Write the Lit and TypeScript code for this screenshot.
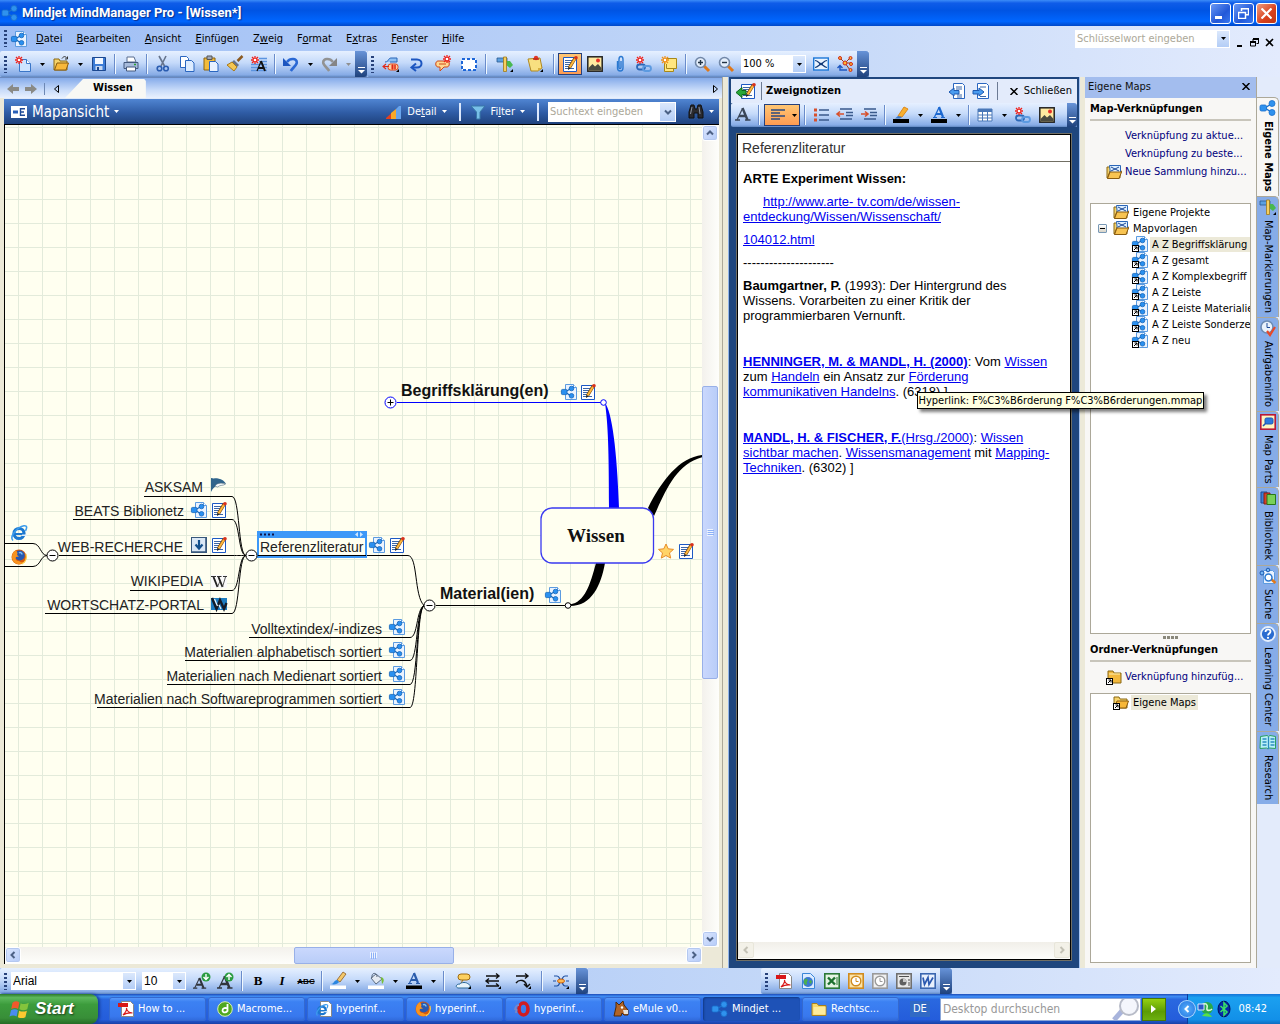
import { LitElement, html, svg, css, nothing } from "lit";
import { customElement } from "lit/decorators.js";

const graph = svg`<path d="M5 8 11 4M5 8 11 12" stroke="#1a70cc" stroke-width="1.500" fill="none"/><rect x="0" y="5" width="6.500" height="6" rx="1.500" fill="#2f92ee" stroke="#1a70cc" stroke-width=".8"/><circle cx="12" cy="3.500" r="3" fill="#2f92ee" stroke="#1a70cc" stroke-width=".8"/><circle cx="12" cy="12.500" r="3" fill="#2f92ee" stroke="#1a70cc" stroke-width=".8"/>`;
const page = svg`<path d="M4.500.5h8l3 3v12h-11z" fill="#eaf3ff" stroke="#5b9be0"/><path d="M12.500.5v3h3" fill="#fff" stroke="#5b9be0"/>`;
const miniGraph = svg`<path d="M4 8 10 4.500M4 8 10 12" stroke="#1464b8" stroke-width="1.200" fill="none"/><rect x=".4" y="5.400" width="5.600" height="5.200" rx="1.200" fill="#2a90f0" stroke="#1464b8" stroke-width=".8"/><circle cx="10.500" cy="4.500" r="2.300" fill="#2a90f0" stroke="#1464b8" stroke-width=".8"/><circle cx="10.500" cy="11.800" r="2.300" fill="#2a90f0" stroke="#1464b8" stroke-width=".8"/>`;
const spark = svg`<path d="M4 0v8M0 4h8M1 1l6 6M7 1 1 7" stroke="#f0201a" stroke-width="1.300"/><circle cx="4" cy="4" r="1.300" fill="#fff"/>`;
const pencil = svg`<path d="M13.500 1.500 7.500 11.500" stroke="#7a4a10" stroke-width="3.400"/><path d="M13.500 2 7.500 11.500" stroke="#ffb83c" stroke-width="2"/><circle cx="14" cy="1.800" r="1.800" fill="#d8301c"/><path d="m6 14 .3-3.200 2.400 1.500z" fill="#222"/>`;
const notePage = svg`<path d="M1.500 1.500h13v14h-13z" fill="#fff" stroke="#1c59c4"/><path d="M3 4.500h8M3 6.500h7M3 8.500h6M3 10.500h4M3 12.500h9" stroke="#3a66a8"/>`;
const folder = svg`<path d="M1 3h5l1 2h7v9H1z" fill="#f6d36b" stroke="#8a6914"/><path d="M1.500 14 4 7h11.500L13 14z" fill="#f8b83a" stroke="#8a5c10"/>`;
const shortcut = svg`<rect x=".5" y="9.500" width="6" height="6" fill="#fff" stroke="#000"/><path d="M2 14 5 11M2.500 11h2.500v2.500" stroke="#000" fill="none"/>`;
const lens = svg`<path d="m10 10 5 5" stroke="#e07818" stroke-width="3"/><circle cx="6.500" cy="6.500" r="5" fill="#e4eefb" stroke="#7288a8" stroke-width="1.600"/>`;
const chain = svg`<rect x="1" y="8.500" width="8" height="5" rx="2.500" fill="none" stroke="#2c68b8" stroke-width="1.800"/><rect x="7" y="10" width="8" height="5" rx="2.500" fill="none" stroke="#5c9ae0" stroke-width="1.800"/>`;
const corner = svg`<path d="M16 13v3h-3z" fill="#000"/>`;
const mountain = svg`<rect x=".8" y=".8" width="14.400" height="14.400" fill="#ffe9a0" stroke="#222" stroke-width="1.500"/><path d="M1.500 12 5.500 8 8 10.500 11 8l3.500 4v2.500h-13z" fill="#4a4a40"/><circle cx="11" cy="4.500" r="2" fill="#e83028"/>`;
const fox = svg`<circle cx="8" cy="8" r="7.500" fill="#d85a0c"/><circle cx="8.800" cy="6.500" r="5" fill="#2858b0"/><path d="M5 1C1 3.500 0 8 2 12c3 4.500 10 4 13 0-2 1.500-5 2-7 0-3 0-4-2-3-4l3-.5-2-1.500.5-2z" fill="#f89420"/><path d="M8 4c1.500-1 3 0 3 1.500" stroke="#7cc0f4" stroke-width="1.500" fill="none"/><path d="M15 5c1 4-1 8-4 10" stroke="#fcd04a" stroke-width="1.200" fill="none"/>`;
const ieE = svg`<circle cx="8" cy="8.500" r="5" fill="none" stroke="#1c78d0" stroke-width="3.200"/><path d="M4 9h9" stroke="#1c78d0" stroke-width="2"/><path d="M11 11h5v-1.500h-5z" fill="#dfeefc"/><path d="M2 15.500C-2 12 6 2 13 .8c4-.3 2.500 3 1.500 5" fill="none" stroke="#3c9cec" stroke-width="1.600"/>`;
const clock = (c: string, f: string) => svg`<rect x=".8" y=".8" width="14.400" height="14.400" fill="${f}" stroke="${c}" stroke-width="1.600"/><circle cx="8" cy="8" r="4.800" fill="#fff" stroke="${c}" stroke-width="1.400"/><path d="M8 5v3.500h2.500" stroke="${c}" fill="none"/>`;
const bigA = (c: string) => svg`<path d="M2 13 7.500 1.500" stroke="${c}" stroke-width="1.200"/><path d="M7.500 1 12.500 13M4 9h6" stroke="${c}" stroke-width="2.400" fill="none"/><path d="M0 13h5M10 13h5.500" stroke="${c}" stroke-width="1.400"/>`;

const ICONS: Record<string, unknown> = {
  graph,
  mapdoc: svg`${page}${miniGraph}`,
  notes: svg`${notePage}${pencil}`,
  maplink: svg`${page}${miniGraph}${shortcut}`,
  new: svg`<path d="M4.500 3.500h7l4 4v8h-11z" fill="#cfe4ff" stroke="#3a76c8"/><path d="M11.500 3.500v4h4" fill="#fff" stroke="#3a76c8"/>${spark}`,
  open: svg`${folder}<path d="M9 2.500c2-3 4-2 5 0m.5-2v2.500h-2.500" stroke="#333" fill="none"/>`,
  save: svg`<path d="M1.500 1.500h13v13h-13z" fill="#3c7cd6" stroke="#1b478f"/><path d="M4 2h8v6H4z" fill="#f2f7ff"/><path d="M4.500 10h7v4h-7z" fill="#c8d8f0"/><path d="M6 11h2v3H6z" fill="#1b478f"/>`,
  print: svg`<path d="M4 1h7l2 5H4z" fill="#fff" stroke="#5b6f90"/><path d="M1 6.500h14v6H1z" fill="#a8bcdc" stroke="#43597e"/><path d="M3.500 11h9v4h-9z" fill="#fff" stroke="#43597e"/><path d="M11 8.500h2" stroke="#2aa030" stroke-width="1.500"/>`,
  cut: svg`<path d="M4 0 9.500 10M11 0 6 10" stroke="#66748c" stroke-width="1.600"/><circle cx="4.500" cy="12.500" r="2.300" fill="none" stroke="#2a5cb0" stroke-width="1.600"/><circle cx="11" cy="12.500" r="2.300" fill="none" stroke="#2a5cb0" stroke-width="1.600"/>`,
  copy: svg`<path d="M1.500.5h6l2 2v9h-8z" fill="#fff" stroke="#2a66c0"/><path d="M6.500 4.500h6l2.500 2.500v8.500H6.500z" fill="#dcebff" stroke="#2a66c0"/>`,
  paste: svg`<path d="M1 2h11v12H1z" fill="#f2bb3c" stroke="#8c6410"/><path d="M4 0h5v3.500H4z" fill="#a0a8b8" stroke="#555"/><path d="M6.500 5.500h6L15 8v7.500H6.500z" fill="#e8f2ff" stroke="#2a66c0"/>`,
  brush: svg`<path d="m15.500 0-5 5" stroke="#8c5a20" stroke-width="2.500"/><path d="m7 4 5 5-2 2-5-5z" fill="#6a7488"/><path d="M5 6 0 9l7 6 3-4z" fill="#f4c652" stroke="#a87818"/>`,
  topicA: svg`<path d="M8 2.500h8M8 5.500h8M0 8.500h16M0 11.500h16M0 14.500h16" stroke="#5c94e0" stroke-width="1.400"/><path d="M6 15 10 5.500" stroke="#111" stroke-width="1.200"/><path d="m10 5 4 10M7 12h5" stroke="#111" stroke-width="2" fill="none"/>${spark}`,
  undo: svg`<path d="M0 2v8h8z" fill="#1d56c0"/><path d="M4 6C7 2 14 2 13.800 6.500c0 3-4 5-6 8.500" fill="none" stroke="#2a68d4" stroke-width="2.600"/>`,
  redo: svg`<path d="M16 2v8H8z" fill="#858585"/><path d="M12 6C9 2 2 2 2.200 6.500c0 3 4 5 6 8.500" fill="none" stroke="#929292" stroke-width="2.600"/>`,
  subtopic: svg`<path d="M2 6c4 0 3-4 6-4h6v4H7" fill="#8ec0f4" stroke="#2a66b8"/><rect x="5" y="8" width="10" height="6" rx="2.500" fill="#ffcf9a" stroke="#e04818"/><path d="M0 10.500h6M3 8l-3 2.500L3 13M8 10h5M8 12h5M9.500 8.500v5M12 8.500v5" stroke="#e02818" stroke-width="1.100" fill="none"/>${corner}`,
  relation: svg`<path d="M2 3.500h6c6 0 6 8 0 8H4" stroke="#1d56c0" stroke-width="2" fill="none"/><path d="M7 7.500 2.500 11.500 7 15" stroke="#1d56c0" stroke-width="2" fill="none"/>`,
  callout: svg`<path d="M3 5h9c3 0 3 6 0 6H9l-4 4V11H3C0 11 0 5 3 5z" fill="#ffd890" stroke="#d04818"/><path d="M4 8h7" stroke="#d04818"/><g transform="translate(8 -1)">${spark}</g>`,
  boundary: svg`<rect x="1" y="3" width="14" height="11" fill="#fff" stroke="#1d66d8" stroke-width="2" stroke-dasharray="3 2"/>`,
  marker: svg`<path d="M0 2h10v4H0z" fill="#5ca0e0" stroke="#2a5890" stroke-width=".8"/><path d="M9 5h4l3 4-3 3-4-3z" fill="#48b850"/><path d="M6.500 1h3v14.500h-3z" fill="#f6cf60" stroke="#a07818" stroke-width=".8"/>${corner}`,
  pin: svg`<path d="m1 3 12-1 2 10-4 3H4z" fill="#f8e080" stroke="#b08820"/><path d="m11 15 0-3h4z" fill="#d8b040"/><circle cx="9" cy="2" r="2.200" fill="#e03828"/><path d="M6 3h6" stroke="#c02818" stroke-width="1.500"/>${corner}`,
  picture: mountain,
  clip: svg`<path d="M5.500 5v7c0 4 5.500 4 5.500 0V3.500c0-4-4-4-4 0v8c0 1.500 2 1.500 2 0V5" fill="none" stroke="#2a78d0" stroke-width="1.400"/>`,
  hyper: svg`${chain}${spark}`,
  task: svg`<path d="M5.500 2.500h10v10h-3v3H3.500v-9z" fill="#ffe680" stroke="#a88818"/><path d="M5.500 8v4.500H13" fill="none" stroke="#a88818"/><path d="M4 0v8M0 4h8M1 1l6 6M7 1 1 7" stroke="#f09018" stroke-width="1.300"/><circle cx="4" cy="4" r="1.200" fill="#fff"/>`,
  zoomin: svg`${lens}<path d="M6.500 4v5M4 6.500h5" stroke="#234" stroke-width="1.400"/>`,
  zoomout: svg`${lens}<path d="M4 6.500h5" stroke="#234" stroke-width="1.400"/>`,
  fit: svg`<rect x=".7" y="2" width="14.600" height="12" fill="#eaf4ff" stroke="#1d78d8" stroke-width="1.400"/><path d="M2 4.500c3 0 4 3 6 3.500M2 11.500c3 0 4-3 6-3.500m6-3.500c-3 0-4 3-6 3.500m6 3.500c-3 0-4-3-6-3.500" stroke="#123a78" stroke-width="1.200" fill="none"/><ellipse cx="8" cy="8" rx="2" ry="1.300" fill="#123a78"/>`,
  balance: svg`<path d="M8 7 3 2M8 7l5-5M8 7h6M8 7l5 7" stroke="#a03818"/><g fill="#ffb830" stroke="#d02818"><circle cx="3" cy="2" r="1.500"/><circle cx="13.500" cy="2" r="1.500"/><circle cx="8" cy="7" r="2"/><circle cx="14" cy="8" r="1.500"/><circle cx="13.500" cy="14" r="1.500"/></g><path d="M3 10v4h7M.5 12 3 9.500 5.500 12" stroke="#1d56c0" fill="none" stroke-width="1.400"/>`,
  mapview: svg`<rect x="0" y="2" width="16" height="12" fill="#fff"/><path d="M2 8h5" stroke="#2a60b8" stroke-width="3"/><path d="M9.500 4v8M9 4.700h5M9 8h4M9 11.300h5" stroke="#1d4a98" stroke-width="1.400" fill="none"/>`,
  detail: svg`<path d="M0 14 5 9.500V15H0z" fill="#e04020"/><path d="m5 9 5-4v10H5z" fill="#f8a828"/><path d="m10 5 3-3 2 0v13h-5z" fill="#68a4ec"/>`,
  filter: svg`<path d="M1 2h14L10 8v7H6.500V8z" fill="#78c0e8" stroke="#3878a8"/>`,
  binoc: svg`<path d="M3 1h3l1 4h2l1-4h3l2 7v6h-5V9H6v5H1V8z" fill="#2a2a2e" stroke="#111"/><path d="M4 3 2.500 10M11 3l1 7" stroke="#8c94a4"/>`,
  notesback: svg`<g transform="translate(3)">${notePage}${pencil}</g><path d="M-1 9.500 5 4.500V7.500h4v4H5v3z" fill="#2aa838" stroke="#0f6a1c"/>`,
  prev: svg`<path d="M4.500.5h9l2 2v13h-11z" fill="#fff" stroke="#2a66c0"/><path d="M7 4h6M7 6h6M8 12h5M8 14h5" stroke="#3a66a8"/><path d="m0 9 5-4v2.500h5v3.500H5v2z" fill="#4a9cf0" stroke="#1c58b0"/>`,
  next: svg`<path d="M4.500.5h9l2 2v13h-11z" fill="#fff" stroke="#2a66c0"/><path d="M7 4h6M7 13.500h6" stroke="#3a66a8"/><path d="m11 9-5-4v2.500H0v3.500h6v2z" fill="#4a9cf0" stroke="#1c58b0"/>`,
  fontA: bigA("#3a4658"),
  align: svg`<path d="M1 3h14M1 6h9M1 9h14M1 12h9" stroke="#2a4a80" stroke-width="1.400"/>`,
  bullets: svg`<path d="M6 3h10M6 8h10M6 13h10" stroke="#3a5a8c" stroke-width="1.400"/><path d="M1 1.500h3v3H1zM1 6.500h3v3H1zM1 11.500h3v3H1z" fill="#d8502c"/>`,
  outdent: svg`<path d="M3 2h12M9 5.500h7M9 8.500h7M3 12h12" stroke="#3a5a8c" stroke-width="1.400"/><path d="M0 7h7M3 4.500 0 7l3 2.500" stroke="#d8502c" stroke-width="1.600" fill="none"/>`,
  indent: svg`<path d="M3 2h12M9 5.500h7M9 8.500h7M3 12h12" stroke="#3a5a8c" stroke-width="1.400"/><path d="M0 7h7M4 4.500 7 7 4 9.500" stroke="#d8502c" stroke-width="1.600" fill="none"/>`,
  highlight: svg`<path d="m5 9 6-9 4 2-6 8z" fill="#f8b030" stroke="#e08818"/><path d="m2 11.500 3-2.500 4 1-2 1.500z" fill="#3a78c8"/><rect y="12" width="16" height="4"/>`,
  fontcolor: svg`<path d="M3.500 10 8 .5" stroke="#1c68d0" stroke-width="1.300"/><path d="M8 0 12 10M5 7h6" stroke="#1c68d0" stroke-width="2.200" fill="none"/><path d="M2 10.500h4M10 10.500h4" stroke="#1c68d0"/><rect y="12" width="16" height="4"/>`,
  table: svg`<path d="M1 2h14v12H1z" fill="#fff" stroke="#4a78b8"/><path d="M1 3.500h14" stroke="#4a78b8" stroke-width="3"/><path d="M1 8h14M1 11h14M5.500 3v11M10.500 3v11" stroke="#4a78b8"/>`,
  mapfolder: svg`${folder}<path d="M3.500 1.500h11v8l-10 .5z" fill="#dff0ff" stroke="#2a66b8"/><path d="m5 3 8 4M5 7l8-4" stroke="#1c4a98"/><path d="M1.500 14.500 4 8h11.500L13 14.500z" fill="#f8c452" stroke="#8a5c10"/>`,
  folderlink: svg`<path d="M2 2h5l1 2h7v10H2z" fill="#f2b83c" stroke="#8a6914"/><path d="M3 5h11" stroke="#fff0b0"/>${shortcut}`,
  folderopen: svg`${folder}${shortcut}`,
  folder: svg`<path d="M1 2.500h5l1.500 2H15v10H1z" fill="#f8d868" stroke="#a8801c"/><path d="M2.500 6h12v7.500h-12z" fill="#fdeb9c"/>`,
  clockcheck: svg`<circle cx="7" cy="7" r="6" fill="#e8f2fc" stroke="#6c8cb4" stroke-width="1.600"/><path d="M7 3v4.500h3" stroke="#1c4a98" fill="none"/><path d="m7 11 3 4 5-8" stroke="#e84828" stroke-width="2.200" fill="none"/>`,
  mappart: svg`<rect x=".8" y=".8" width="14.400" height="14.400" fill="#fff4c0" stroke="#b81838" stroke-width="1.600"/><rect x="5" y="4" width="8" height="6" rx="1.500" fill="#2a78e0" stroke="#1c58b0"/><path d="M6 9 3 12" stroke="#1c58b0" stroke-width="1.600"/>`,
  library: svg`<path d="M1 2h6v11H1z" fill="#3a80d8" stroke="#1c4a90"/><path d="M4 3h6v11H4z" fill="#d84028" stroke="#882010"/><path d="M7 4.500h8.500v10H7z" fill="#78d058" stroke="#287818"/>`,
  mapsearch: svg`<path d="M3.500 2.500h9l2 2v11h-11z" fill="#eaf3ff" stroke="#5b9be0"/><path d="m11 11 4.500 4" stroke="#e07818" stroke-width="2.400"/><circle cx="8.500" cy="9.500" r="3.500" fill="#fff" stroke="#2a78d0" stroke-width="1.500"/><circle cx="2" cy="5" r="2" fill="#78b8f4" stroke="#1c58b0"/><circle cx="8" cy="2" r="1.800" fill="#78b8f4" stroke="#1c58b0"/>`,
  help: svg`<circle cx="8" cy="8" r="7" fill="#2a6cd0" stroke="#e4eefc" stroke-width="1.800"/><path d="M5.500 6c0-3.500 5-3.500 5-.5 0 2-2.500 2-2.500 4" stroke="#fff" stroke-width="1.800" fill="none"/><circle cx="8" cy="11.800" r="1.100" fill="#fff"/>`,
  research: svg`<path d="M.5 2.500 7 1.500l1.500 1 1.500-1 5.500 1v12l-6-.5-1.500 1-1.500-1-6.500.5z" fill="#b8f0f8" stroke="#2aa060"/><path d="M8.500 3v12M2.500 5h4M2.500 8h4M2.500 11h4M10.500 5h4M10.500 8h4M10.500 11h4" stroke="#2a8cc0" stroke-width="1.300"/>`,
  fontdown: svg`<g transform="translate(-1 4) scale(.85)">${bigA("#30343c")}</g><circle cx="12" cy="4" r="4.500" fill="#2a9c40"/><path d="M12 1v5M9.500 4 12 6.500 14.500 4" stroke="#fff" fill="none" stroke-width="1.400"/>`,
  fontup: svg`<g transform="translate(-1 2)">${bigA("#30343c")}</g><circle cx="11" cy="4" r="4.500" fill="#2a9c40"/><path d="M11 7V2M8.500 4 11 1.500 13.500 4" stroke="#fff" fill="none" stroke-width="1.400"/>`,
  pen: svg`<path d="m7 7 6-8 3 2-6 8z" fill="#f4c86a" stroke="#8c5a20" stroke-width=".8"/><path d="M1 11c3 0 3-4 6-4l2 2c-1 2-5 3-8 2z" fill="#2a86e0"/><rect y="12.500" width="16" height="3.500" fill="#fff"/>`,
  bucket: svg`<path d="m3 5 5-4 6 5-6 5z" fill="#e4eaf2" stroke="#5a6a80"/><path d="M4 5c-1-6 5-6 5-1" fill="none" stroke="#5a6a80"/><path d="M13 4c4 1 3 5 1 7z" fill="#78c038"/><rect y="12.500" width="16" height="3.500" fill="#fff"/>`,
  linecolor: svg`<path d="M3.500 10 8 .5" stroke="#2a5cac" stroke-width="1.300"/><path d="M8 0 12 10M5 7h6" stroke="#2a5cac" stroke-width="2.200" fill="none"/><path d="M2 10.500h4M10 10.500h4" stroke="#2a5cac"/><rect y="12.500" width="16" height="3.500"/>`,
  shape: svg`<rect x="3" y="1" width="12" height="6" rx="3" fill="#fcd060" stroke="#a06c10"/><path d="M8 7 6 10" stroke="#a06c10"/><path d="M3 15h11c2-1 1-4-1-4-1-2-7-2-8 0-4 0-5 3-2 4z" fill="#e8f4fc" stroke="#2a6898"/>${corner}`,
  growth: svg`<path d="M1 3h13M11 .5 14 3l-3 2.500M1 8h13M4 5.500 1 8l3 2.500M1 13h13M11 10.500 14 13" stroke="#111" stroke-width="1.400" fill="none"/>${corner}`,
  curve: svg`<path d="M1 3h12M10 .5 13 3l-3 2.500M1 10c3-4 10-4 11 4M9 11l3 3 3-3" stroke="#111" stroke-width="1.400" fill="none"/>${corner}`,
  topicline: svg`<path d="M1 3h3c3 0 2 4 4 4s1-4 4-4h3M1 13h3c3 0 2-5 4-5s1 5 4 5h3M0 8h3M13 8h3" stroke="#1d4ea0" stroke-width="1.200" fill="none"/><ellipse cx="8" cy="8" rx="3.500" ry="2" fill="#fcb850" stroke="#c86010"/>${corner}`,
  pdf: svg`<path d="M3.500.5h9l3 3v12h-12z" fill="#fff" stroke="#888"/><rect y="2" width="10" height="4" fill="#d81818"/><path d="M5 14c3-3 4-5 3.500-7 0 3 3 5 6 5-4-.5-7 .5-9.500 2z" fill="none" stroke="#d81818" stroke-width="1.200"/>`,
  web: svg`<path d="M2.500.5h8l4 4v11h-12z" fill="#dcebff" stroke="#3a86d8"/><circle cx="8" cy="9" r="5" fill="#3a78d0"/><path d="M5 6c3-1 3 2 2 3s1 3-1 3-3-4-1-6zM10 7l2 1-1 3-2-2z" fill="#4cb04c"/>`,
  excel: svg`<rect x=".8" y=".8" width="14.400" height="14.400" fill="#e4f4e4" stroke="#2a7838" stroke-width="1.600"/><path d="m4 4.500 7 7M11 4.500l-7 7" stroke="#1c7030" stroke-width="2.400"/><path d="M13 4v8" stroke="#2a7838"/>`,
  outlook: clock("#d08c20", "#fce4a8"),
  project: clock("#9a9a9a", "#f0f0f0"),
  ppt: svg`<rect x=".8" y=".8" width="14.400" height="14.400" fill="#e8e8e8" stroke="#707070" stroke-width="1.600"/><path d="M3 3.500h10M12 7h2M12 10h2M12 12h2" stroke="#505050"/><circle cx="7" cy="9" r="3.500" fill="#606060"/><path d="M7 9V5.500A3.500 3.500 0 0 1 10.500 9z" fill="#c8c8c8"/>`,
  word: svg`<rect x=".8" y=".8" width="14.400" height="14.400" fill="#e8f0fc" stroke="#3a66b0" stroke-width="1.600"/><path d="m3 4.500 1.500 7 3.500-7 1 7 4-7" stroke="#2a58b0" stroke-width="1.700" fill="none"/>`,
  flag: svg`<path d="M2 3c2-1.500 4-1.500 5.500-.2L6.500 8C5 7 3 7 1 8z" fill="#f0582c"/><path d="M8.500 3.300c2 1 4 1 6.500-.3l-1.200 5.200c-2 1-4.300 1-6.300 0z" fill="#84c43c"/><path d="M.8 9c2-1 4-1 5.500 0l-1 5C3.500 13 1.500 13-.4 14z" fill="#4a8cf0"/><path d="M7.300 9.300c2 1 4 1 6.200 0l-1.200 5.200c-2 1-4 1-6 0z" fill="#fcc830"/>`,
  macro: svg`<circle cx="8" cy="8" r="7.300" fill="#50a820" stroke="#d8f0b8"/><path d="M10.500 3v7.500M10.500 9c0 3-5 3-5 .5s3-3 5-2" stroke="#fff" stroke-width="1.800" fill="none"/>`,
  ie: ieE,
  iepage: svg`<path d="M4.500.5h8l3 3v12h-11z" fill="#fff" stroke="#888"/><g transform="translate(0 3) scale(.75)">${ieE}</g>`,
  fox,
  opera: svg`<ellipse cx="9.500" cy="8" rx="4.500" ry="6" fill="none" stroke="#d01c20" stroke-width="3.600"/><path d="M1 9c0-3 2-5 4-5M2 12c0-2 0-3 1-4" stroke="#7888c8" stroke-width="1.800" fill="none"/>`,
  emule: svg`<path d="m3 6 0-5 3 3 4-4 1 4 4 5v5h-4l-2-2-1 3H1z" fill="#b06428" stroke="#502808"/><path d="M10 9h5v4h-4z" fill="#e8e0d8"/><circle cx="9" cy="6.500" r="1.200" fill="#fff"/>`,
  plug: svg`<circle cx="9" cy="7" r="6" fill="#2aa848"/><path d="M4 4c4-3 6 0 5 3s3 3 5 1" stroke="#d8f8d8" stroke-width="1.600" fill="none"/><path d="M0 3h6v6H0z" fill="#2a58c8" stroke="#d8e8fc"/><path d="M4 15c4-5 8-2 10 1z" fill="#58e048"/>`,
  bluetooth: svg`<ellipse cx="8" cy="8" rx="6" ry="7.800" fill="#0828a8" stroke="#001058"/><path d="m4.500 5 6.500 6-3 3V2l3 3-6.500 6" stroke="#38e068" stroke-width="1.600" fill="none"/>`,
  star: svg`<path d="m8 1 2.200 4.800 5.300.6-4 3.500 1.200 5.200L8 12.500l-4.700 2.600 1.200-5.200-4-3.500 5.300-.6z" fill="#ffd468" stroke="#e88c28"/>`,
  download: svg`<rect x=".5" y=".5" width="15" height="15" fill="#dbe8f6" stroke="#38587c"/><path d="M15 1v14H1" fill="none" stroke="#38587c" stroke-width="1.600"/><path d="M8 3v7M4.500 7.500 8 11.500l3.500-4" stroke="#14508c" stroke-width="2.200" fill="none"/>`,
  fish: svg`<path d="M0 0c3 1 4 0 7 .5 4 .5 7 3 8 5.500-3-1.500-6-1-8 1-3 1-5 3-7 7z" fill="#2f648c"/><path d="M4 8c2-3 5-3.500 10.500-2-2 2-5 .5-8 3z" fill="#f4f8fa" stroke="#506c80" stroke-width=".6"/>`,
  wiki: svg`<rect width="16" height="13" fill="#fafafa"/><path d="M0 1.500h5M6 1.500h4.500M12 1.500h4" stroke="#333"/><path d="M2.500 2 6.500 12M7.500 2l4 10" stroke="#222" stroke-width="1.900"/><path d="M6.500 12 9 6M11.500 12l3-10" stroke="#444" stroke-width=".9"/>`,
  wort: svg`<rect y="1" width="16" height="12" fill="#1c7cc0"/><path d="m1 1 4.500 11L9 3l4 9 2.500-6" stroke="#141c28" stroke-width="2.400" fill="none"/><path d="m3.500 2 3 7M8 8l2 4" stroke="#f0f8fc" stroke-width="1.200"/>`,
};

const icon = (name: string) => html`<svg class="ic" viewBox="0 0 16 16" width="16" height="16" aria-hidden="true">${ICONS[name]}</svg>`;
const pic = (name: string, x: number, y: number) => svg`<g transform="translate(${x} ${y})">${ICONS[name]}</g>`;
const down = html`<svg class="dn" viewBox="0 0 5 3" width="5" height="3" aria-hidden="true"><path d="M0 0h5L2.500 3z" fill="currentColor"/></svg>`;

const shared = css`
  * { box-sizing: border-box; }
  :host { font: 11px/14px "DejaVu Sans Condensed", "Liberation Sans", sans-serif; color: #000; }
  button { font: inherit; color: inherit; border: 0; padding: 0; background: none; display: flex; align-items: center; justify-content: center; flex: none; }
  a { color: inherit; }
  svg { flex: none; display: block; }
  .ic { overflow: visible; }
  .bar { display: flex; align-items: center; height: 26px; flex: none; background: linear-gradient(#e6f0ff, #c5dafa 45%, #86abe6 92%, #5f86bf); border-radius: 2px 0 0 2px; }
  .grip { width: 3px; height: 17px; margin: 0 4px 0 4px; background: repeating-linear-gradient(#27417a 0 2px, transparent 2px 4px); flex: none; }
  .tool { width: 24px; height: 22px; }
  .tool.wide { width: 26px; }
  .tool.broad { width: 30px; }
  .tool.on { border: 1px solid #26407c; background: linear-gradient(#ffc673, #fd9b52); }
  .arrow { width: 14px; height: 22px; }
  .arrow.off { color: #8f8f8f; }
  .sep { width: 2px; height: 20px; margin: 0 3px; border-left: 1px solid #6a8ccb; border-right: 1px solid #f1f9ff; flex: none; }
  .more { width: 12px; height: 100%; align-items: flex-end; padding-bottom: 3px; color: #fff; background: linear-gradient(#6793d8, #1f427d); border-radius: 0 3px 3px 0; }
  .combo { display: grid; grid-template-columns: 1fr 12px; background: #fff; border: 1px solid #fff; height: 18px; flex: none; }
  .combo select, .combo input { grid-area: 1 / 1 / 2 / 3; appearance: none; border: 0; background: transparent; padding: 0 12px 0 1px; margin: 0; font: inherit; width: 100%; min-width: 0; outline: 0; color: #000; }
  .combo input::placeholder { color: #aca899; opacity: 1; }
  .combo .drop { grid-area: 1 / 2; background: linear-gradient(#dbe8fc, #b3cdf6); display: grid; place-items: center; pointer-events: none; }
`;

interface Tool { i?: string; l?: string; s?: string; a?: boolean; off?: boolean; on?: boolean; }
const tools = (list: Tool[]) => list.map((t) => !t.i
  ? html`<span class="sep"></span>`
  : html`<button class="tool ${t.s ?? ""} ${t.on ? "on" : ""}" aria-label=${t.l ?? t.i}>${icon(t.i)}</button>${t.a
      ? html`<button class="arrow ${t.off ? "off" : ""}" aria-label="${t.l ?? t.i} Optionen">${down}</button>` : nothing}`);
const more = html`<button class="more" aria-label="Weitere Schaltflächen"><svg viewBox="0 0 7 7" width="7" height="7"><path d="M0 .5h7" stroke="#fff"/><path d="M0 3h7L3.500 6.500z" fill="#fff"/></svg></button>`;

@customElement("mind-canvas")
class MindCanvas extends LitElement {
  static styles = [shared, css`
    :host { display: block; min-width: 0; min-height: 0; background: #fffff0; overflow: hidden; position: relative; }
    .map { position: absolute; inset: 0; width: 100%; height: 100%; }
    .leaf { font: 14px "Liberation Sans", Arial, sans-serif; fill: #222; }
    .main { font: bold 16px "Liberation Sans", Arial, sans-serif; fill: #111; }
    .core { font: bold 19px "Liberation Serif", serif; fill: #111; }
    .ln { fill: none; stroke: #000; }
    .end { text-anchor: end; }
  `];
  private leaves: [string, number, number, number, number][] = [
    ["ASKSAM", 203, 492, 144, 496.5], ["BEATS Biblionetz", 184, 516, 73, 519.5], ["WEB-RECHERCHE", 183, 552, 59, 555.5],
    ["WIKIPEDIA", 203, 586, 130, 590.5], ["WORTSCHATZ-PORTAL", 204, 610, 45, 613.5],
  ];
  private sources: [string, number, number, number][] = [
    ["Volltextindex/-indizes", 634, 249, 637.5], ["Materialien alphabetisch sortiert", 657, 185, 660.5],
    ["Materialien nach Medienart sortiert", 681, 167, 684.5], ["Materialien nach Softwareprogrammen sortiert", 704, 97, 707.5],
  ];
  private knob(x: number, y: number, color: string, plus = false) {
    return svg`<circle cx=${x} cy=${y} r="5.500" fill="#fff" stroke=${color}/><path d="M${x - 3} ${y}h6${plus ? ` M${x} ${y - 3}v6` : ""}" stroke="#000"/>`;
  }
  render() {
    return html`<svg class="map" role="img" aria-label="Mindmap Wissen">
      <defs><pattern id="grid" width="24" height="24" patternUnits="userSpaceOnUse" x="18" y="7"><path d="M.5 0v24M0 .5h24" stroke="#e3ebdb"/></pattern></defs>
      <g transform="translate(-5 -125)">
        <rect x="0" y="100" width="4000" height="4000" fill="url(#grid)"/>
        ${this.leaves.map(([t, x, y, l, u]) => svg`<text class="leaf end" x=${x} y=${y}>${t}</text>
          <path class="ln" d="M${l} ${u}H232C240 ${u} 238 555.500 246 555.500"/>`)}
        ${this.sources.map(([t, y, l, u]) => svg`<text class="leaf end" x="382" y=${y}>${t}</text>
          <path class="ln" d="M${l} ${u}H410C418 ${u} 416 610 424 605.500"/>${pic("mapdoc", 389, u - 18.5)}`)}
        <path class="ln" d="M258 555.500H408C418 556 414 596 424 605.500M436 605.500H565M0 543.500H33C41 544 40 555 47 555.500C40 556 41 566 33 566.500H0"/>
        <path d="M596 563C590 585 585 602 570 604.500V606C592 606 601 585 605 563z"/>
        <path d="M703 455C680 457 662 480 648 508L654 516C666 490 676 464 703 457z"/>
        <path d="M397 402.500H601" stroke="#00f"/><path d="M605 403C612 412 617 450 619 508H609C609 450 608 424 605 403z" fill="#00f"/>
        <circle cx="603.500" cy="402.500" r="2.800" fill="#fff" stroke="#00f"/><circle cx="568" cy="605.500" r="2.800" fill="#fff" stroke="#000"/>
        <rect x="541" y="508" width="112.500" height="55" rx="11" fill="#fffff0" stroke="#3a3af0" stroke-width="1.300"/>
        ${this.knob(390.5, 402.5, "#00f", true)}${this.knob(429.5, 605.5, "#000")}${this.knob(52.5, 555.5, "#000")}
        <rect x="258" y="532" width="108" height="25" fill="#fffff0" stroke="#3c98f8" stroke-width="2"/><path d="M257 531h110v7H257z" fill="#3c98f8"/>
        <path d="M260 534.500h15" stroke="#114" stroke-width="2" stroke-dasharray="2 2"/><path d="m358 532-3 2.500 3 2.500zM360 532l3 2.500-3 2.500z" fill="#cde6ff"/>
        <path class="ln" d="M258 555.500h108"/>${this.knob(251.5, 555.5, "#000")}
        <text class="leaf" x="260" y="552">Referenzliteratur</text>
        <text class="main" x="401" y="396">Begriffsklärung(en)</text><text class="main" x="440" y="599">Material(ien)</text>
        <text class="core" x="567" y="542">Wissen</text>
        ${pic("ie", 11, 525)}${pic("fox", 11, 549)}${pic("fish", 211, 478)}${pic("mapdoc", 191, 502)}${pic("notes", 211, 502)}
        ${pic("download", 191, 537)}${pic("notes", 211, 537)}${pic("wiki", 211, 575)}${pic("wort", 211, 597)}
        ${pic("mapdoc", 369, 537)}${pic("notes", 389, 537)}${pic("mapdoc", 561, 384)}${pic("notes", 580, 384)}
        ${pic("mapdoc", 545, 587)}${pic("star", 658, 543)}${pic("notes", 678, 543)}
      </g></svg>`;
  }
}

@customElement("map-panel")
class MapPanel extends LitElement {
  static styles = [shared, css`
    :host { display: flex; flex-direction: column; min-width: 0; background: #ece9d8; border-right: 1px solid #aca899; padding-right: 3px; }
    .tabs { display: flex; align-items: center; height: 21px; background: linear-gradient(#85abea, #c8dbf9 60%, #e9f1fe); border-top: 1px solid #6a88bc; margin-right: -3px; padding: 1px 4px 0 4px; }
    .nav { color: #808080; width: 18px; }
    .nav.list { margin-left: 6px; width: 10px; color: #000; }
    .bar1 { width: 1px; height: 12px; background: #6d88b4; margin-left: 4px; }
    .tab { display: block; margin-left: 4px; height: 19px; line-height: 18px; padding: 0 13px 0 28px; font-weight: bold; background: #f8f8f4; clip-path: polygon(18px 0, 98% 0, 100% 2px, 100% 100%, 0 100%); align-self: flex-end; text-decoration: none; }
    .last { margin-left: auto; }
    .head { display: flex; align-items: center; height: 26px; margin-left: 4px; padding: 0 5px 0 7px; color: #fff; background: linear-gradient(#5085d2, #2f5ca5 55%, #1f427d); border-top: 1px solid #dfe9fa; }
    .view { gap: 5px; font-size: 15px; }
    .right { margin-left: auto; display: flex; align-items: center; }
    .right button { gap: 5px; }
    .line { width: 2px; height: 18px; background: #dce8fc; margin: 0 9px 0 12px; }
    .find { width: 128px; color: #4a6185; margin-right: 12px; }
    .find.combo { grid-template-columns: 1fr 15px; height: 20px; }
    .scroller { flex: 1; display: grid; grid-template-columns: minmax(0, 1fr) 17px; grid-template-rows: minmax(0, 1fr) 17px; margin-left: 4px; border-left: 1px solid #000; border-top: 1px solid #000; margin-bottom: 4px; }
    .track { display: flex; background: linear-gradient(#f3f1ec, #fefefb); }
    .track.v { flex-direction: column; background: linear-gradient(90deg, #f3f1ec, #fefefb); }
    .knob { width: 16px; height: 16px; border: 1px solid #fff; border-radius: 3px; background: linear-gradient(135deg, #dbe6fe, #b5cbf8); color: #4d6185; box-shadow: inset 0 0 0 1px #b4c8f0; }
    .thumb { border: 1px solid #98b0e8; border-radius: 2px; background: #c4d4fc; display: grid; place-items: center; }
    .h .thumb { background: linear-gradient(#cad8fd, #b9cdf8); flex: 158; }
    .v .thumb { background: linear-gradient(90deg, #cad8fd, #b9cdf8); margin-right: 1px; flex: 291; }
    .a { flex: 274; } .b { flex: 233; } .c { flex: 246; } .d { flex: 253; }
  `];
  render() {
    const chev = (d: string) => html`<svg viewBox="0 0 8 8" width="8" height="8"><path d=${d} fill="none" stroke="currentColor" stroke-width="2"/></svg>`;
    return html`
      <nav class="tabs" aria-label="Dokumente">
        <button class="nav" aria-label="Zurück"><svg viewBox="0 0 12 10" width="12" height="10"><path d="M0 5 6 0v3h6v4H6v3z" fill="#8a8a86"/></svg></button>
        <button class="nav" aria-label="Vor"><svg viewBox="0 0 12 10" width="12" height="10"><path d="M12 5 6 0v3H0v4h6v3z" fill="#8a8a86"/></svg></button>
        <span class="bar1"></span>
        <button class="nav list" aria-label="Vorheriges Dokument"><svg viewBox="0 0 5 8" width="5" height="8"><path d="M4.500.5v7l-4-3.500z" fill="none" stroke="#000"/></svg></button>
        <a class="tab" href="#wissen">Wissen</a>
        <button class="last" aria-label="Nächstes Dokument"><svg viewBox="0 0 5 8" width="5" height="8"><path d="M.5.5v7l4-3.500z" fill="none" stroke="#000"/></svg></button>
      </nav>
      <div class="head">
        <button class="view">${icon("mapview")}<span>Mapansicht</span>${down}</button>
        <div class="right">
          <button>${icon("detail")}<span>De<u>t</u>ail</span>${down}</button><span class="line"></span>
          <button>${icon("filter")}<span>Fi<u>l</u>ter</span>${down}</button><span class="line"></span>
          <span class="combo find"><input aria-label="Suchtext" placeholder="Suchtext eingeben"><span class="drop">${chev("M1 2.500 4 5.500 7 2.500")}</span></span>
          <button aria-label="Suchen">${icon("binoc")}${down}</button>
        </div>
      </div>
      <div class="scroller">
        <mind-canvas></mind-canvas>
        <div class="track v">
          <button class="knob" aria-label="Nach oben">${chev("M1 5.500 4 2.500 7 5.500")}</button><span class="c"></span>
          <span class="thumb"><svg viewBox="0 0 7 8" width="7" height="8"><path d="M0 .5h6M0 2.500h6M0 4.500h6M0 6.500h6" stroke="#eef4fe"/><path d="M1 1.500h6M1 3.500h6M1 5.500h6" stroke="#8cb0f8"/></svg></span>
          <span class="d"></span><button class="knob" aria-label="Nach unten">${chev("M1 2.500 4 5.500 7 2.500")}</button>
        </div>
        <div class="track h">
          <button class="knob" aria-label="Nach links">${chev("M5.500 1 2.500 4 5.500 7")}</button><span class="a"></span>
          <span class="thumb"><svg viewBox="0 0 8 7" width="8" height="7"><path d="M.5 0v6M2.500 0v6M4.500 0v6M6.500 0v6" stroke="#eef4fe"/><path d="M1.500 1v6M3.500 1v6M5.500 1v6" stroke="#8cb0f8"/></svg></span>
          <span class="b"></span><button class="knob" aria-label="Nach rechts">${chev("M2.500 1 5.500 4 2.500 7")}</button>
        </div>
      </div>`;
  }
}

@customElement("notes-panel")
class NotesPanel extends LitElement {
  static styles = [shared, css`
    :host { display: flex; flex-direction: column; background: #1f467e; padding: 2px 2px 8px; border-left: 1px solid #93b5ea; border-right: 1px solid #a8c6f4; }
    .head { display: flex; align-items: center; height: 24px; background: #e3ebfb; padding: 0 5px 0 2px; }
    .title { font-size: 11px; line-height: 14px; margin: 0 auto 0 4px; }
    .v { width: 1px; height: 18px; background: #6d7b94; margin-left: 4px; }
    .close { margin-left: 12px; gap: 6px; }
    .bar { height: 24px; }
    .bar .more { margin-left: auto; width: 10px; }
    .bar .tool.al { width: 36px; margin: 0 1px; gap: 6px; padding-left: 2px; }
    .sheet { flex: 1; display: flex; flex-direction: column; margin: 7px 6px 0 6px; background: #fff; border: 1px solid #000; outline: 1px solid #716f64; min-width: 0; }
    .topic { font: 14px/26px "Liberation Sans", Arial, sans-serif; color: #333; padding: 0 4px; border-bottom: 1px solid #716f64; margin: 0; }
    .text { flex: 1; padding: 9px 5px; display: flex; flex-direction: column; gap: 8px; font: 13px/15px "Liberation Sans", Arial, sans-serif; }
    .text p { margin: 0; min-height: 15px; }
    .text a { color: #0000f0; }
    .ind { padding-left: 20px; }
    .tipped { position: relative; }
    .tip { position: absolute; z-index: 5; left: 8px; top: 23px; white-space: nowrap; background: #ffffe1; border: 1px solid #000; box-shadow: 3px 3px 3px rgba(0, 0, 0, .5); font: 11px/15px "DejaVu Sans Condensed", "Liberation Sans", sans-serif; padding: 0 1px; color: #000; }
    .hs { display: flex; justify-content: space-between; height: 17px; background: linear-gradient(#f1efe9, #fdfdfb); }
    .hs button { width: 16px; height: 16px; margin: 0; border: 1px solid #e8e6da; border-radius: 2px; color: #c4c2b6; background: #f3f1e8; }
  `];
  render() {
    return html`
      <div class="head">
        <button class="tool" aria-label="Zur Map">${icon("notesback")}</button><span class="v"></span>
        <h2 class="title">Zweignotizen</h2>
        <button class="tool" aria-label="Vorherige Notiz">${icon("prev")}</button><button class="tool" aria-label="Nächste Notiz">${icon("next")}</button>
        <span class="v"></span>
        <button class="close"><svg viewBox="0 0 8 7" width="8" height="7"><path d="m.5 0 7 7m0-7-7 7" stroke="#000" stroke-width="1.500"/></svg><span>Schließen</span></button>
      </div>
      <div class="bar">
        <button class="tool" aria-label="Schriftart">${icon("fontA")}</button><span class="sep"></span>
        <button class="tool al on" aria-label="Ausrichtung">${icon("align")}${down}</button>
        ${tools([{}, { i: "bullets", l: "Aufzählung" }, { i: "outdent", l: "Einzug verkleinern" }, { i: "indent", l: "Einzug vergrößern" }, {},
          { i: "highlight", l: "Hervorheben", a: true }, { i: "fontcolor", l: "Schriftfarbe", a: true }, {}, { i: "table", l: "Tabelle", a: true }, { i: "hyper", l: "Hyperlink" }, { i: "picture", l: "Bild" }])}
        ${more}
      </div>
      <article class="sheet">
        <h3 class="topic">Referenzliteratur</h3>
        <div class="text">
          <p><b>ARTE Experiment Wissen:</b></p>
          <p><span class="ind"></span><a href="#arte">http://www.arte- tv.com/de/wissen-<br>entdeckung/Wissen/Wissenschaft/</a></p>
          <p><a href="#arte2">104012.html</a></p>
          <p>---------------------</p>
          <p><b>Baumgartner, P.</b> (1993): Der Hintergrund des<br>Wissens. Vorarbeiten zu einer Kritik der<br>programmierbaren Vernunft.</p>
          <p></p>
          <p><a href="#hm"><b>HENNINGER, M. &amp; MANDL, H. (2000)</b></a>: Vom <a href="#w">Wissen</a><br>zum <a href="#h">Handeln</a> ein Ansatz zur <span class="tipped"><a href="#f">Förderung</a><span class="tip" role="tooltip">Hyperlink: F%C3%B6rderung F%C3%B6rderungen.mmap</span></span><br><a href="#k">kommunikativen Handelns</a>. (6318) ]</p>
          <p></p>
          <p><a href="#mf"><b>MANDL, H. &amp; FISCHER, F.</b>(Hrsg./2000)</a>: <a href="#w">Wissen<br>sichtbar machen</a>. <a href="#wm">Wissensmanagement</a> mit <a href="#mt">Mapping-<br>Techniken</a>. (6302) ]</p>
        </div>
        <div class="hs">
          <button aria-label="Nach links" disabled><svg viewBox="0 0 8 8" width="8" height="8"><path d="M5.500 1 2.500 4 5.500 7" fill="none" stroke="currentColor" stroke-width="2"/></svg></button>
          <button aria-label="Nach rechts" disabled><svg viewBox="0 0 8 8" width="8" height="8"><path d="M2.500 1 5.500 4 2.500 7" fill="none" stroke="currentColor" stroke-width="2"/></svg></button>
        </div>
      </article>`;
  }
}

@customElement("side-panel")
class SidePanel extends LitElement {
  static styles = [shared, css`
    :host { display: flex; min-width: 0; background: #f8f7f5; }
    .body { flex: 1; min-width: 0; display: flex; flex-direction: column; border-right: 1px solid #aca899; padding-bottom: 5px; }
    .head { display: flex; align-items: center; justify-content: space-between; height: 21px; background: #a3bdee; padding: 0 5px 2px 3px; color: #111; }
    .head button { width: 10px; height: 14px; }
    h2 { font-size: 11px; line-height: 14px; margin: 4px 5px 0; padding-bottom: 3px; border-bottom: 2px solid #c8c5bb; white-space: nowrap; }
    .links { padding: 6px 0 0 21px; display: flex; flex-direction: column; }
    .links a { display: flex; align-items: center; gap: 3px; height: 18px; color: #00007d; text-decoration: none; white-space: nowrap; }
    .links .plain { padding-left: 19px; }
    .box { margin: 0 5px; border: 1px solid #aca899; background: #fff; overflow: hidden; list-style: none; padding: 0; }
    .one { flex: 434; margin-top: 22px; }
    .two { flex: 271; margin-top: 7px; }
    li { display: flex; align-items: center; height: 16px; gap: 2px; padding-left: 22px; white-space: nowrap; }
    li.sub { padding-left: 41px; }
    li.open { padding-left: 7px; }
    .box span { padding: 0 2px; line-height: 15px; }
    .sel { background: #ece9d8; }
    .exp { width: 9px; height: 9px; border: 1px solid #7898b5; border-radius: 1px; background: linear-gradient(#fff, #d8d4c8); margin-right: 4px; }
    .dots { width: 15px; height: 3px; margin: 2px auto 0; background: repeating-linear-gradient(90deg, #8a887c 0 3px, transparent 3px 4px); flex: none; }
    .tabs { width: 23px; display: flex; flex-direction: column; padding-top: 20px; background: #e3ebfb; flex: none; align-items: flex-start; }
    .tab { flex-direction: column; justify-content: flex-start; width: 22px; padding: 2px 0 4px; gap: 5px; background: #86ace8; border: 1px solid #aca899; border-left: 0; border-bottom: 0; border-radius: 0 5px 0 0; }
    .tab span { writing-mode: vertical-rl; line-height: 18px; }
    .tab.act { background: #f8f7f5; font-weight: bold; }
  `];
  render() {
    const tab = (i: string, t: string, act = false) => html`<button class="tab ${act ? "act" : ""}">${icon(i)}<span>${t}</span></button>`;
    const subs = ["A Z Begriffsklärung u", "A Z gesamt", "A Z Komplexbegriff K", "A Z Leiste", "A Z Leiste Materialien", "A Z Leiste Sonderzei", "A Z neu"];
    return html`
      <section class="body">
        <div class="head"><span>Eigene Maps</span><button aria-label="Schließen"><svg viewBox="0 0 8 7" width="8" height="7"><path d="m.5 0 7 7m0-7-7 7" stroke="#000" stroke-width="1.500"/></svg></button></div>
        <h2>Map-Verknüpfungen</h2>
        <div class="links">
          <a class="plain" href="#a"><span>Verknüpfung zu aktue...</span></a>
          <a class="plain" href="#b"><span>Verknüpfung zu beste...</span></a>
          <a href="#c">${icon("mapfolder")}<span>Neue Sammlung hinzu...</span></a>
        </div>
        <ul class="box one">
          <li>${icon("mapfolder")}<span>Eigene Projekte</span></li>
          <li class="open"><button class="exp" aria-label="Reduzieren"><svg viewBox="0 0 5 1" width="5" height="1"><path d="M0 0h5v1H0z"/></svg></button>${icon("mapfolder")}<span>Mapvorlagen</span></li>
          ${subs.map((s, i) => html`<li class="sub">${icon("maplink")}<span class=${i ? "" : "sel"}>${s}</span></li>`)}
        </ul>
        <div class="dots"></div>
        <h2>Ordner-Verknüpfungen</h2>
        <div class="links"><a href="#d">${icon("folderlink")}<span>Verknüpfung hinzufüg...</span></a></div>
        <ul class="box two"><li>${icon("folderopen")}<span class="sel">Eigene Maps</span></li></ul>
      </section>
      <div class="tabs">
        ${tab("graph", "Eigene Maps", true)}${tab("marker", "Map-Markierungen")}${tab("clockcheck", "Aufgabeninfo")}${tab("mappart", "Map Parts")}
        ${tab("library", "Bibliothek")}${tab("mapsearch", "Suche")}${tab("help", "Learning Center")}${tab("research", "Research")}
      </div>`;
  }
}

@customElement("task-bar")
class TaskBar extends LitElement {
  static styles = [shared, css`
    :host { display: flex; align-items: center; height: 30px; color: #fff; background: linear-gradient(#1c4bb8, #3f8cf3 8%, #2a68e0 18%, #245ddb 85%, #1941a5); }
    .start { align-self: stretch; width: 98px; gap: 5px; justify-content: flex-start; padding-left: 10px; background: linear-gradient(#2c7a2c, #5cb85c 12%, #3c9c3c 35%, #388e38 80%, #256b25); border-radius: 0 8px 8px 0; font: italic bold 17px/24px "Liberation Sans", sans-serif; text-shadow: 1px 1px 2px #1a3c1a; box-shadow: 2px 0 3px #173f9c; }
    .start svg { width: 20px; height: 20px; }
    .tasks { display: flex; gap: 2px; margin-left: 11px; flex: 0 1 790px; min-width: 0; }
    .task { flex: 1 1 0; min-width: 0; height: 24px; justify-content: flex-start; gap: 4px; padding: 0 4px 0 9px; border-radius: 3px; background: linear-gradient(#5f9ffb, #3c81f3 20%, #3878ee 80%, #2f68d8); box-shadow: inset 0 0 0 1px #3469cf; white-space: nowrap; }
    .task.act { background: #1e52b7; box-shadow: inset 1px 1px 2px #123a86; }
    .lang { margin-left: 11px; padding: 1px 3px; background: #316ac5; }
    .find { display: grid; grid-template-columns: minmax(0, 1fr) 28px; margin-left: 10px; width: 201px; height: 23px; background: #fff; border: 1px solid #8aa6d8; align-items: center; }
    .find input { width: 100%; border: 0; outline: 0; padding: 0 2px; font: inherit; font-size: 12px; background: transparent; }
    .find input::placeholder { color: #999; opacity: 1; }
    .go { width: 24px; height: 23px; background: linear-gradient(#94d010, #5c9c04 60%, #6cb010); border: 1px solid #487804; margin-left: 1px; }
    .tray { margin-left: auto; align-self: stretch; display: flex; align-items: center; gap: 2px; padding: 0 13px 0 0; background: linear-gradient(#1474d8, #1ba0f0 12%, #1290e8 85%, #0f6cc0); border-left: 1px solid #0c3c9c; }
    .tray time { margin-left: 4px; }
    .hide { width: 18px; height: 18px; border-radius: 9px; background: radial-gradient(#58b0fc, #1a6cdc); box-shadow: inset 0 0 0 1px #a8d4fc; margin-left: -10px; }
  `];
  render() {
    const items: [string, string][] = [["pdf", "How to ..."], ["macro", "Macrome..."], ["iepage", "hyperinf..."], ["fox", "hyperinf..."], ["opera", "hyperinf..."], ["emule", "eMule v0..."], ["graph", "Mindjet ..."], ["folder", "Rechtsc..."]];
    return html`
      <button class="start">${icon("flag")}<span>Start</span></button>
      <div class="tasks">${items.map(([i, t]) => html`<button class="task ${i === "graph" ? "act" : ""}">${icon(i)}<span>${t}</span></button>`)}</div>
      <span class="lang">DE</span>
      <div class="find"><input aria-label="Desktop durchsuchen" placeholder="Desktop durchsuchen"><svg viewBox="0 0 28 21" width="28" height="21"><path d="m2 21 8-9" stroke="#a8b4dc" stroke-width="5"/><circle cx="17" cy="7" r="9" fill="#f4f6fc" stroke="#b8bcc8" stroke-width="2"/></svg></div>
      <button class="go" aria-label="Suchen"><svg viewBox="0 0 5 8" width="5" height="8"><path d="M0 0v8l5-4z" fill="#fff"/></svg></button>
      <div class="tray"><button class="hide" aria-label="Ausblenden"><svg viewBox="0 0 8 8" width="8" height="8"><path d="M5.500 1 2.500 4 5.500 7" fill="none" stroke="#fff" stroke-width="2"/></svg></button>
        ${icon("plug")}${icon("bluetooth")}<time>08:42</time></div>`;
  }
}

@customElement("app-root")
class AppRoot extends LitElement {
  static styles = [shared, css`
    :host { display: flex; flex-direction: column; min-height: 100vh; background: linear-gradient(90deg, #9ebef5, #c4d8f8 62%, #e3ebfd); overflow: hidden; }
    .title { display: flex; align-items: center; height: 26px; padding: 0 3px 0 2px; gap: 2px; color: #fff; background: linear-gradient(#3c8cf8, #0f5ce8 12%, #0054e3 40%, #0066ff 82%, #0048c8); }
    .title h1 { font: bold 13px/20px Roboto, "Noto Sans", sans-serif; margin: 0 auto 0 2px; text-shadow: 1px 1px 1px #0a2f8c; }
    .win { width: 21px; height: 21px; border: 1px solid #fff; border-radius: 3px; background: linear-gradient(135deg, #6a98f4, #2258d8 60%, #3a78f0); }
    .win.x { background: linear-gradient(135deg, #f09c80, #d8401c 60%, #c03818); }
    .menu { display: flex; align-items: center; height: 25px; padding: 0 3px 0 0; }
    .menu .logo { margin-right: 9px; }
    .menu .items { display: flex; gap: 14px; margin-right: auto; }
    .menu .items button { display: block; }
    .menu u { text-underline-offset: 1px; }
    .key { width: 155px; color: #000; margin-right: 2px; }
    .mdi { width: 15px; height: 22px; align-items: flex-end; padding-bottom: 3px; }
    .row { display: flex; flex: none; }
    .zoom { width: 65px; margin: 0 3px 0 3px; }
    .font { width: 125px; }
    .size { width: 44px; margin: 0 4px 0 6px; }
    .font select, .size select { font: 12px "Liberation Sans", sans-serif; }
    .txt { font: bold 13px "Liberation Serif", serif; }
    .txt.i { font-style: italic; }
    .txt.s { font: bold 8px "Liberation Sans", sans-serif; text-decoration: line-through; }
    .main { flex: 1; display: grid; grid-template-columns: minmax(0, 1fr) 352px 195px; column-gap: 5px; background: #ece9d8; }
    .export { margin-left: auto; margin-right: 328px; }
  `];
  render() {
    const menu: [string, string, string][] = [["", "D", "atei"], ["", "B", "earbeiten"], ["", "A", "nsicht"], ["", "E", "infügen"], ["Z", "w", "eig"], ["F", "o", "rmat"], ["E", "x", "tras"], ["", "F", "enster"], ["", "H", "ilfe"]];
    return html`
      <header class="title">${icon("graph")}<h1>Mindjet MindManager Pro - [Wissen*]</h1>
        <button class="win" aria-label="Minimieren"><svg viewBox="0 0 11 11" width="11" height="11"><path d="M0 8h7v3H0z" fill="#fff"/></svg></button>
        <button class="win" aria-label="Wiederherstellen"><svg viewBox="0 0 11 11" width="11" height="11"><path d="M3.500 3V.8h7v6H8M.5 4.500h7v6h-7z" fill="none" stroke="#fff" stroke-width="1.500"/></svg></button>
        <button class="win x" aria-label="Schließen"><svg viewBox="0 0 11 11" width="11" height="11"><path d="m.5.5 10 10m0-10-10 10" stroke="#fff" stroke-width="2.200"/></svg></button>
      </header>
      <nav class="menu"><span class="grip"></span><span class="logo">${icon("mapdoc")}</span>
        <div class="items">${menu.map(([a, b, c]) => html`<button>${a}<u>${b}</u>${c}</button>`)}</div>
        <span class="combo key"><input aria-label="Schlüsselwort" placeholder="Schlüsselwort eingeben"><span class="drop">${down}</span></span>
        <button class="mdi" aria-label="Fenster minimieren"><svg viewBox="0 0 9 9" width="9" height="9"><path d="M2 7h5v2H2z"/></svg></button>
        <button class="mdi" aria-label="Fenster wiederherstellen"><svg viewBox="0 0 9 9" width="9" height="9"><path d="M3 3V1h5.500v4.500H6.500M.5 4h5v4h-5z" fill="none" stroke="#000"/><path d="M3 1h6M0 4h6" stroke="#000" stroke-width="2"/></svg></button>
        <button class="mdi" aria-label="Fenster schließen"><svg viewBox="0 0 9 9" width="9" height="9"><path d="m1 1 7 7m0-7L1 8" stroke="#000" stroke-width="1.600"/></svg></button>
      </nav>
      <div class="row">
        <div class="bar"><span class="grip"></span>
          ${tools([{ i: "new", l: "Neu", a: true }, { i: "open", l: "Öffnen", a: true }, { i: "save", l: "Speichern" }, {}, { i: "print", l: "Drucken" }, {}, { i: "cut", l: "Ausschneiden" }, { i: "copy", l: "Kopieren" }, { i: "paste", l: "Einfügen" }, { i: "brush", l: "Format übertragen" }, { i: "topicA", l: "Neuer Zweig" }, {}, { i: "undo", l: "Rückgängig", a: true }, { i: "redo", l: "Wiederholen", a: true, off: true }])}${more}</div>
        <div class="bar"><span class="grip"></span>
          ${tools([{ i: "subtopic", s: "wide", l: "Unterzweig" }, { i: "relation", s: "wide", l: "Beziehung" }, { i: "callout", s: "wide", l: "Legende" }, { i: "boundary", s: "wide", l: "Umrandung" }, {}, { i: "marker", s: "broad", l: "Markierungen" }, { i: "pin", s: "broad", l: "Notizzettel" }, {}, { i: "notes", on: true, l: "Notizen" }, { i: "picture", s: "wide", l: "Bild" }, { i: "clip", l: "Anlage" }, { i: "hyper", l: "Hyperlink" }, { i: "task", s: "wide", l: "Aufgabe" }, {}, { i: "zoomin", l: "Vergrößern" }, { i: "zoomout", l: "Verkleinern" }])}
          <span class="combo zoom"><select aria-label="Zoom"><option>100 %</option></select><span class="drop">${down}</span></span>
          ${tools([{ i: "fit", l: "Einpassen" }, { i: "balance", l: "Ausgleichen" }])}${more}</div>
      </div>
      <main class="main"><map-panel></map-panel><notes-panel></notes-panel><side-panel></side-panel></main>
      <div class="row">
        <div class="bar"><span class="grip"></span>
          <span class="combo font"><select aria-label="Schriftart"><option>Arial</option></select><span class="drop">${down}</span></span>
          <span class="combo size"><select aria-label="Schriftgröße"><option>10</option></select><span class="drop">${down}</span></span>
          ${tools([{ i: "fontdown", l: "Kleiner" }, { i: "fontup", l: "Größer" }, {}])}
          <button class="tool txt">B</button><button class="tool txt i">I</button><button class="tool txt s">ABC</button>
          ${tools([{}, { i: "pen", l: "Linienfarbe", a: true }, { i: "bucket", l: "Füllfarbe", a: true }, { i: "linecolor", l: "Schriftfarbe", a: true }, {}, { i: "shape", s: "broad", l: "Form" }, { i: "growth", s: "broad", l: "Richtung" }, { i: "curve", s: "broad", l: "Linie" }, {}, { i: "topicline", s: "broad", l: "Layout" }])}${more}</div>
        <div class="bar export"><span class="grip"></span>
          ${tools([{ i: "pdf", l: "PDF" }, { i: "web", l: "Web" }, { i: "excel", l: "Excel" }, { i: "outlook", l: "Outlook" }, { i: "project", l: "Project" }, { i: "ppt", l: "PowerPoint" }, { i: "word", l: "Word" }])}${more}</div>
      </div>
      <task-bar></task-bar>`;
  }
}
